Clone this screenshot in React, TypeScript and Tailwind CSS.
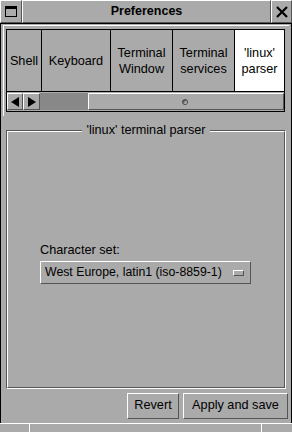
import React from "react";

const raised = "border border-t-white border-l-white border-b-[#555555] border-r-[#555555]";

function WindowIcon() {
  return (
    <svg width="12" height="11" viewBox="0 0 12 11">
      <rect x="0.5" y="0.5" width="11" height="10" fill="none" stroke="black" />
      <rect x="1" y="1" width="10" height="2" fill="black" />
    </svg>
  );
}

function CloseIcon() {
  return (
    <svg width="12" height="12" viewBox="0 0 12 12">
      <path d="M1 1 L11 11 M11 1 L1 11" stroke="black" strokeWidth="2.2" />
    </svg>
  );
}

const tabs = [
  { label: ["Shell"], w: "w-[34px]" },
  { label: ["Keyboard"], w: "w-[68px]" },
  { label: ["Terminal", "Window"], w: "w-[61px]" },
  { label: ["Terminal", "services"], w: "w-[61px]" },
  { label: ["'linux'", "parser"], w: "w-[49px]", active: true },
];

export default function App() {
  return (
    <div className="w-[292px] h-[432px] bg-[#aaaaaa] text-black font-['Liberation_Sans',Arial,sans-serif] flex flex-col overflow-hidden select-none">
      {/* Title bar */}
      <div className="h-[24px] flex border-b border-black shrink-0">
        <div className={`w-[22px] h-[23px] flex items-center justify-center ${raised}`}>
          <WindowIcon />
        </div>
        <div className={`flex-1 h-[23px] flex items-center justify-center text-[12.5px] font-bold ${raised}`}>
          Preferences
        </div>
        <div className={`w-[21px] h-[23px] flex items-center justify-center ${raised}`}>
          <CloseIcon />
        </div>
      </div>

      {/* Body */}
      <div className="flex-1 flex flex-col border-l border-r border-black min-h-0">
        {/* Tab widget */}
        <div className="mt-[1px] mx-[2px] border-t border-l border-white px-[2px] pt-[3px] pb-[4px]">
          <div className="flex border border-black h-[63px] w-[279px]">
            {tabs.map((t, i) => (
              <div
                key={i}
                className={`${t.w} h-full flex flex-col items-center justify-center text-[12.7px] leading-[16px] whitespace-nowrap overflow-visible ${
                  i < tabs.length - 1 ? "border-r border-black" : ""
                } ${t.active ? "bg-white" : "bg-[#aaaaaa]"}`}
                style={{ boxSizing: "content-box" }}
              >
                {t.label.map((l) => (
                  <span key={l}>{l}</span>
                ))}
              </div>
            ))}
          </div>
          {/* Scrollbar */}
          <div className="flex w-[279px] h-[20px] border-l border-r border-b border-black pt-[1px] pb-[1px]">
            <div className={`w-[16px] h-[17px] flex items-center justify-center ${raised}`}>
              <svg width="10" height="10" viewBox="0 0 10 10">
                <polygon points="1,5 9,0 9,10" fill="black" />
              </svg>
            </div>
            <div className={`w-[17px] h-[17px] flex items-center justify-center ${raised}`}>
              <svg width="10" height="10" viewBox="0 0 10 10">
                <polygon points="9,5 1,0 1,10" fill="black" />
              </svg>
            </div>
            <div className="w-[48px] h-[17px] bg-[#888888]" />
            <div className={`flex-1 h-[17px] flex items-center justify-center pr-[2px] ${raised}`}>
              <div className="w-[6px] h-[6px] rounded-full bg-gradient-to-br from-[#333333] to-white border border-[#444444]" />
            </div>
          </div>
        </div>

        {/* Group box */}
        <div className="relative mt-[14px] mx-[5px] h-[259px] border border-t-[#555555] border-l-[#555555] border-b-white border-r-white">
          <div className="absolute inset-0 border border-t-white border-l-white border-b-[#555555] border-r-[#555555]" />
          <div className="absolute -top-[8px] left-0 right-0 flex justify-center">
            <span className="bg-[#aaaaaa] px-[4px] text-[12.7px] leading-[14px]">'linux' terminal parser</span>
          </div>
          <div className="absolute left-[33px] top-[112px] flex flex-col">
            <span className="text-[12.7px] leading-[15px] mb-[3px]">Character set:</span>
            <div className={`w-[211px] h-[23px] flex items-center justify-between pl-[4px] pr-[6px] text-[12.3px] ${raised}`}>
              <span>West Europe, latin1 (iso-8859-1)</span>
              <div className={`w-[11px] h-[6px] ${raised}`} />
            </div>
          </div>
        </div>

        {/* Buttons */}
        <div className="flex justify-end gap-[4px] mt-[4px] pr-[3px]">
          <div className={`w-[52px] h-[26px] flex items-center justify-center text-[12.7px] ${raised}`}>Revert</div>
          <div className={`w-[105px] h-[26px] flex items-center justify-center text-[12.7px] ${raised}`}>Apply and save</div>
        </div>
      </div>

      {/* Status bar */}
      <div className="h-[9px] shrink-0 flex border-t border-white">
        <div className="w-[30px] border-r border-white" />
        <div className="w-[232px] border-r border-white" />
        <div className="flex-1" />
      </div>
    </div>
  );
}
